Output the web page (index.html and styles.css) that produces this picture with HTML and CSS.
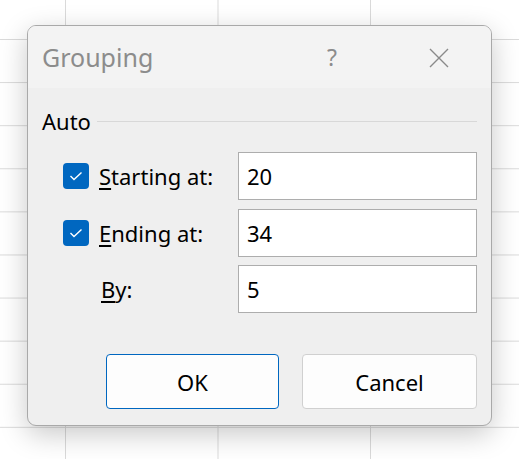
FILE: index.html
```html
<!DOCTYPE html>
<html>
<head>
    <title>Grouping</title>
    <link rel="stylesheet" href="styles.css">
</head>
<body>
    <div class="sheet">
        <div class="dialog">
            <div class="titlebar">
                <span class="title">Grouping</span>
                <span class="help">?</span>
                <span class="close">
                    <svg width="20" height="20" viewBox="0 0 20 20">
                        <path d="M1 1 L19 19 M19 1 L1 19" stroke="#8a8a8a" stroke-width="1.4" fill="none"/>
                    </svg>
                </span>
            </div>

            <div class="content">
                <div class="group">
                    <span class="group-name">Auto</span>
                    <span class="group-line"></span>
                </div>

                <div class="form">
                    <span class="check">
                        <svg width="14" height="10" viewBox="0 0 14 10">
                            <path d="M1.5 5 L5 8.5 L12.5 1.5" stroke="#fff" stroke-width="1.4" fill="none"/>
                        </svg>
                    </span>
                    <label class="label"><u>S</u>tarting at:</label>
                    <div class="field">20</div>

                    <span class="check">
                        <svg width="14" height="10" viewBox="0 0 14 10">
                            <path d="M1.5 5 L5 8.5 L12.5 1.5" stroke="#fff" stroke-width="1.4" fill="none"/>
                        </svg>
                    </span>
                    <label class="label"><u>E</u>nding at:</label>
                    <div class="field">34</div>

                    <span></span>
                    <label class="label by"><u>B</u>y:</label>
                    <div class="field">5</div>
                </div>

                <div class="buttons">
                    <button class="btn ok">OK</button>
                    <button class="btn">Cancel</button>
                </div>
            </div>
        </div>
    </div>
</body>
</html>
```

FILE: styles.css
```css
body {
    margin: 0;
    font-family: "Noto Sans", "Open Sans", sans-serif;
}

.sheet {
    width: 519px;
    height: 459px;
    overflow: hidden;
    padding: 25px 0 0 27px;
    box-sizing: border-box;
    background-color: #fff;
    background-image:
        linear-gradient(to right, #dadada 1px, transparent 1px),
        linear-gradient(to bottom, #dadada 1px, transparent 1px);
    background-size: 152.5px 43.1px;
    background-position: 65px 39px;
}

.dialog {
    width: 465px;
    height: 401px;
    box-sizing: border-box;
    border: 1px solid #a9a9a9;
    border-radius: 9px;
    background: #efefef;
    box-shadow: 0 8px 28px rgba(0, 0, 0, 0.22);
    overflow: hidden;
}

.titlebar {
    height: 62px;
    display: flex;
    align-items: center;
    background: #f3f3f3;
    padding-left: 14px;
}

.title {
    font-size: 25px;
    color: #8c8c8c;
    flex: 1;
}

.help {
    font-size: 23px;
    color: #8c8c8c;
    width: 102px;
}

.close {
    width: 62px;
    display: flex;
    padding-top: 2px;
}

.content {
    padding: 18px 14px 0 14px;
}

.group {
    display: flex;
    align-items: center;
    gap: 6px;
}

.group-name {
    font-size: 22px;
    color: #000;
}

.group-line {
    flex: 1;
    height: 1px;
    background: #d8d8d8;
    margin-top: 0;
}

.form {
    display: grid;
    grid-template-columns: 26px 1fr 239px;
    grid-auto-rows: 48px;
    row-gap: 8.5px;
    align-items: center;
    margin: 16px 0 0 21px;
}

.check {
    width: 26px;
    height: 26px;
    border-radius: 4px;
    background: #0067c0;
    display: flex;
    align-items: center;
    justify-content: center;
}

.label {
    font-size: 22px;
    padding-left: 10px;
    color: #000;
}

.label u {
    text-decoration-thickness: 2px;
    text-underline-offset: 3px;
}

.by {
    padding-left: 12px;
}

.field {
    height: 48px;
    box-sizing: border-box;
    border: 1px solid #adadad;
    background: #fff;
    font-size: 22px;
    padding-left: 8px;
    display: flex;
    align-items: center;
}

.buttons {
    display: flex;
    gap: 23px;
    justify-content: flex-end;
    margin-top: 41px;
}

.btn {
    width: 175px;
    height: 55px;
    border: 1px solid #d0d0d0;
    border-radius: 4px;
    background: #fdfdfd;
    font-family: inherit;
    font-size: 22px;
    color: #000;
}

.ok {
    border-color: #0067c0;
    width: 173px;
}
```
